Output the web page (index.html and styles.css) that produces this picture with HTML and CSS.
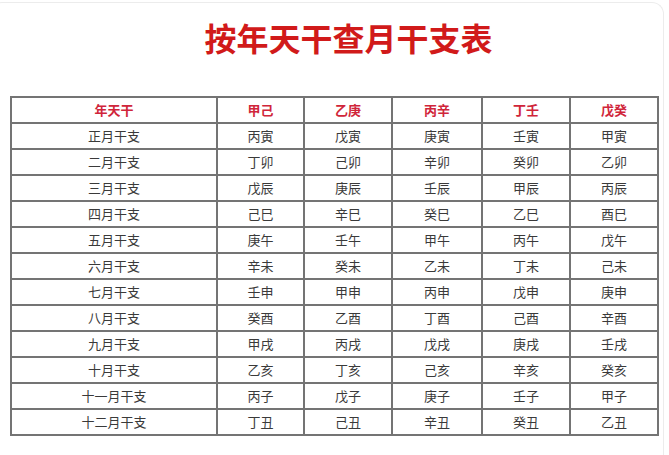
FILE: index.html
```html
<!DOCTYPE html>
<html lang="zh">
<head>
<meta charset="utf-8">
<title>按年天干查月干支表</title>
<link rel="stylesheet" href="styles.css">
</head>
<body>
<div class="card">
  <h1 class="title">按年天干查月干支表</h1>
  <table class="chart">
    <colgroup>
      <col class="c1"><col class="c2"><col class="c3"><col class="c4"><col class="c5"><col class="c6">
    </colgroup>
    <thead>
      <tr><th>年天干</th><th>甲己</th><th>乙庚</th><th>丙辛</th><th>丁壬</th><th>戊癸</th></tr>
    </thead>
    <tbody>
      <tr><td>正月干支</td><td>丙寅</td><td>戊寅</td><td>庚寅</td><td>壬寅</td><td>甲寅</td></tr>
      <tr><td>二月干支</td><td>丁卯</td><td>己卯</td><td>辛卯</td><td>癸卯</td><td>乙卯</td></tr>
      <tr><td>三月干支</td><td>戊辰</td><td>庚辰</td><td>壬辰</td><td>甲辰</td><td>丙辰</td></tr>
      <tr><td>四月干支</td><td>己巳</td><td>辛巳</td><td>癸巳</td><td>乙巳</td><td>酉巳</td></tr>
      <tr><td>五月干支</td><td>庚午</td><td>壬午</td><td>甲午</td><td>丙午</td><td>戊午</td></tr>
      <tr><td>六月干支</td><td>辛未</td><td>癸未</td><td>乙未</td><td>丁未</td><td>己未</td></tr>
      <tr><td>七月干支</td><td>壬申</td><td>甲申</td><td>丙申</td><td>戊申</td><td>庚申</td></tr>
      <tr><td>八月干支</td><td>癸酉</td><td>乙酉</td><td>丁酉</td><td>己酉</td><td>辛酉</td></tr>
      <tr><td>九月干支</td><td>甲戌</td><td>丙戌</td><td>戊戌</td><td>庚戌</td><td>壬戌</td></tr>
      <tr><td>十月干支</td><td>乙亥</td><td>丁亥</td><td>己亥</td><td>辛亥</td><td>癸亥</td></tr>
      <tr><td>十一月干支</td><td>丙子</td><td>戊子</td><td>庚子</td><td>壬子</td><td>甲子</td></tr>
      <tr><td>十二月干支</td><td>丁丑</td><td>己丑</td><td>辛丑</td><td>癸丑</td><td>乙丑</td></tr>
    </tbody>
  </table>
</div>
</body>
</html>
```

FILE: styles.css
```css
html, body {
  margin: 0;
  padding: 0;
  background: #ffffff;
}

body {
  font-family: "Noto Sans CJK SC", "Noto Sans", sans-serif;
  color: #333333;
}

.card {
  margin: 2px 5px 0 -10px;
  height: 453px;
  border: 1px solid #ececec;
  border-bottom: none;
  border-radius: 12px 12px 0 0;
  padding: 14px 0 0 19px;
  box-sizing: border-box;
}

.title {
  margin: 0 0 39px 0;
  padding-left: 24px;
  font-size: 32px;
  line-height: 40px;
  font-weight: 700;
  color: #d11a1a;
  text-align: center;
}

.chart {
  width: 649px;
  table-layout: fixed;
  border-collapse: separate;
  border-spacing: 2px;
  background: #747474;
}

.c1 { width: 204px; }
.c2 { width: 85px; }
.c3 { width: 86px; }
.c4 { width: 88px; }
.c5 { width: 86px; }
.c6 { width: 86px; }

.chart th,
.chart td {
  background: #ffffff;
  height: 24px;
  padding: 0;
  text-align: center;
  vertical-align: middle;
  font-size: 13px;
  line-height: 24px;
}

.chart th {
  color: #d0253a;
  font-weight: 700;
}

.chart td {
  color: #3a3a3a;
  font-weight: 400;
}
```
